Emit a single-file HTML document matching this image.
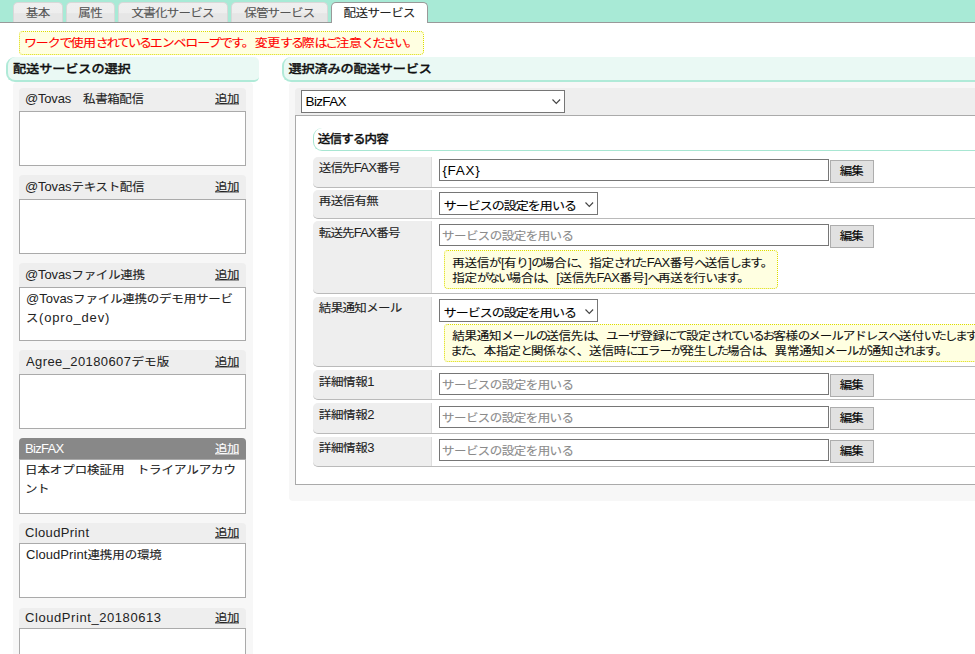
<!DOCTYPE html><html lang="ja"><head><meta charset="utf-8"><title>配送サービス</title><style>

html,body{margin:0;padding:0;}
body{width:975px;height:654px;overflow:hidden;background:#fff;font-family:"Liberation Sans", "Noto Sans CJK JP", sans-serif;font-size:13px;}
.pg{position:relative;width:975px;height:654px;overflow:hidden;background:#fff;}
.a{position:absolute;box-sizing:border-box;}
.t{position:absolute;white-space:nowrap;line-height:20px;height:20px;transform:scaleY(0.9);-webkit-text-stroke:0.12px;transform-origin:0 50%;}
.tab{top:2px;height:20px;border:1px solid #d8d8d8;border-bottom:none;border-radius:5px 5px 0 0;background:linear-gradient(#efefef 0,#eeeeee 52%,#e6e6e6 56%,#e6e6e6 100%);}
.sec{background:#eaf9f4;border-left:2px solid #b0ead8;border-bottom:2px solid #b0ead8;border-radius:9px 5px 5px 9px;}
.ih{background:#eee;border-radius:4px 4px 0 0;}
.ib{background:#fff;border:1px solid #aaa;}
.lab{background:#eee;border-radius:5px 0 0 5px;border-right:1px solid #ddd;border-bottom:1px solid #bababa;}
.rl{height:1px;background:#bababa;}
.inp{background:#fff;border:1px solid #767676;}
.btn{background:#e1e1e1;border:1px solid #adadad;}
.note{background:#ffffe1;border:1px dotted #dcdc00;border-radius:4px;}

</style></head><body><div class="pg">
<nav>
<div class="a" style="left:0;top:0;width:975px;height:22px;background:#a8ead6;"></div>
<div class="a" style="left:0;top:22px;width:975px;height:1px;background:#999;"></div>
<div class="a tab" style="left:13.0px;width:49.5px;"></div>
<span class="t" style="left:25.8px;top:2.9px;font-size:12.5px;font-weight:normal;color:#555;"><span style="letter-spacing:-0.50px;">基本</span></span>
<div class="a tab" style="left:65.5px;width:49.5px;"></div>
<span class="t" style="left:78.2px;top:2.9px;font-size:12.5px;font-weight:normal;color:#555;"><span style="letter-spacing:-0.50px;">属性</span></span>
<div class="a tab" style="left:118.0px;width:109.5px;"></div>
<span class="t" style="left:131.4px;top:2.9px;font-size:12.5px;font-weight:normal;color:#555;"><span style="letter-spacing:-0.75px;">文書化</span><span style="letter-spacing:-0.75px;">サービス</span></span>
<div class="a tab" style="left:230.5px;width:97.0px;"></div>
<span class="t" style="left:244.2px;top:2.9px;font-size:12.5px;font-weight:normal;color:#555;"><span style="letter-spacing:-0.80px;">保管</span><span style="letter-spacing:-0.80px;">サービス</span></span>
<div class="a tab" style="left:330.5px;width:97.0px;background:#fff;height:21px;border-color:#999;"></div>
<span class="t" style="left:343.6px;top:2.9px;font-size:12.5px;font-weight:normal;color:#222;"><span style="letter-spacing:-0.60px;">配送</span><span style="letter-spacing:-0.60px;">サービス</span></span>
</nav>
<section>
<div class="a note" style="left:19px;top:31px;width:405px;height:24px;"></div>
<span class="t" style="left:24.0px;top:33.4px;font-size:13px;font-weight:normal;color:#f00;"><span style="letter-spacing:-1.16px;">ワーク</span><span style="letter-spacing:-2.13px;">で</span><span style="letter-spacing:-0.29px;">使用</span><span style="letter-spacing:-2.13px;">されている</span><span style="letter-spacing:-1.16px;">エンベロープ</span><span style="letter-spacing:-2.13px;">です</span><span style="letter-spacing:-0.18px;">。</span><span style="letter-spacing:-0.29px;">変更</span><span style="letter-spacing:-2.13px;">する</span><span style="letter-spacing:-0.29px;">際</span><span style="letter-spacing:-2.13px;">はご</span><span style="letter-spacing:-0.29px;">注意</span><span style="letter-spacing:-2.13px;">ください</span><span style="letter-spacing:-0.18px;">。</span></span>
</section>
<aside>
<div class="a sec" style="left:6px;top:57px;width:253px;height:24.5px;"></div>
<span class="t" style="left:13.0px;top:58.6px;font-size:13.2px;font-weight:500;color:#111;-webkit-text-stroke:0.35px;"><span style="letter-spacing:-0.12px;">配送</span><span style="letter-spacing:-0.12px;">サービス</span><span style="letter-spacing:-0.12px;">の</span><span style="letter-spacing:-0.12px;">選択</span></span>
<div class="a" style="left:13px;top:82px;width:240px;height:580px;background:#f7f7f7;border-radius:4px;"></div>
<div class="a ih" style="left:19px;top:88.0px;width:227px;height:24.0px;"></div>
<div class="a ib" style="left:19px;top:111.0px;width:227px;height:55.0px;"></div>
<span class="t" style="left:25.0px;top:89.1px;font-size:12.5px;font-weight:normal;color:#222;"><span style="letter-spacing:-0.20px;font-size:13.0px;-webkit-text-stroke:0;display:inline-block;position:relative;top:-0.4px;transform:scaleY(1.09);transform-origin:0 73%;">@Tovas</span><span style="letter-spacing:-0.41px;">　私書箱配信</span></span>
<span class="t" style="left:215.0px;top:89.1px;font-size:12.5px;font-weight:normal;color:#222;text-decoration:underline;"><span style="letter-spacing:-0.50px;">追加</span></span>
<div class="a ih" style="left:19px;top:175.0px;width:227px;height:25.0px;"></div>
<div class="a ib" style="left:19px;top:199.0px;width:227px;height:55.0px;"></div>
<span class="t" style="left:25.0px;top:176.6px;font-size:12.5px;font-weight:normal;color:#222;"><span style="letter-spacing:-0.11px;font-size:13.0px;-webkit-text-stroke:0;display:inline-block;position:relative;top:-0.4px;transform:scaleY(1.09);transform-origin:0 73%;">@Tovas</span><span style="letter-spacing:-0.32px;">テキスト</span><span style="letter-spacing:-0.32px;">配信</span></span>
<span class="t" style="left:215.0px;top:176.6px;font-size:12.5px;font-weight:normal;color:#222;text-decoration:underline;"><span style="letter-spacing:-0.50px;">追加</span></span>
<div class="a ih" style="left:19px;top:263.0px;width:227px;height:25.0px;"></div>
<div class="a ib" style="left:19px;top:287.0px;width:227px;height:54.0px;"></div>
<span class="t" style="left:25.0px;top:264.6px;font-size:12.5px;font-weight:normal;color:#222;"><span style="letter-spacing:-0.11px;font-size:13.0px;-webkit-text-stroke:0;display:inline-block;position:relative;top:-0.4px;transform:scaleY(1.09);transform-origin:0 73%;">@Tovas</span><span style="letter-spacing:-0.32px;">ファイル</span><span style="letter-spacing:-0.32px;">連携</span></span>
<span class="t" style="left:215.0px;top:264.6px;font-size:12.5px;font-weight:normal;color:#222;text-decoration:underline;"><span style="letter-spacing:-0.50px;">追加</span></span>
<span class="t" style="left:26.0px;top:289.1px;font-size:12.5px;font-weight:normal;color:#222;"><span style="letter-spacing:-0.01px;font-size:13.0px;-webkit-text-stroke:0;display:inline-block;position:relative;top:-0.4px;transform:scaleY(1.09);transform-origin:0 73%;">@Tovas</span><span style="letter-spacing:-0.22px;">ファイル</span><span style="letter-spacing:-0.22px;">連携</span><span style="letter-spacing:-0.22px;">の</span><span style="letter-spacing:-0.22px;">デモ</span><span style="letter-spacing:-0.22px;">用</span><span style="letter-spacing:-0.22px;">サービ</span></span>
<span class="t" style="left:26.0px;top:307.7px;font-size:12.5px;font-weight:normal;color:#222;"><span style="letter-spacing:0.60px;">ス</span><span style="letter-spacing:0.81px;font-size:13.0px;-webkit-text-stroke:0;display:inline-block;position:relative;top:-0.4px;transform:scaleY(1.09);transform-origin:0 73%;">(opro_dev)</span></span>
<div class="a ih" style="left:19px;top:350.0px;width:227px;height:25.0px;"></div>
<div class="a ib" style="left:19px;top:374.0px;width:227px;height:55.0px;"></div>
<span class="t" style="left:26.0px;top:351.6px;font-size:12.5px;font-weight:normal;color:#222;"><span style="letter-spacing:0.40px;font-size:13.0px;-webkit-text-stroke:0;display:inline-block;position:relative;top:-0.4px;transform:scaleY(1.09);transform-origin:0 73%;">Agree_20180607</span><span style="letter-spacing:0.19px;">デモ</span><span style="letter-spacing:0.19px;">版</span></span>
<span class="t" style="left:215.0px;top:351.6px;font-size:12.5px;font-weight:normal;color:#222;text-decoration:underline;"><span style="letter-spacing:-0.50px;">追加</span></span>
<div class="a ih" style="left:19px;top:438.0px;width:227px;height:22.0px;background:#888;"></div>
<div class="a ib" style="left:19px;top:459.0px;width:227px;height:55.0px;"></div>
<span class="t" style="left:25.0px;top:438.5px;font-size:12.5px;font-weight:normal;color:#fff;"><span style="letter-spacing:-0.69px;font-size:13.0px;-webkit-text-stroke:0;display:inline-block;position:relative;top:-0.4px;transform:scaleY(1.09);transform-origin:0 73%;">BizFAX</span></span>
<span class="t" style="left:215.0px;top:438.5px;font-size:12.5px;font-weight:normal;color:#fff;text-decoration:underline;"><span style="letter-spacing:-0.50px;">追加</span></span>
<span class="t" style="left:25.0px;top:460.2px;font-size:12.5px;font-weight:normal;color:#222;"><span style="letter-spacing:-0.09px;">日本</span><span style="letter-spacing:-0.09px;">オプロ</span><span style="letter-spacing:-0.09px;">検証用　</span><span style="letter-spacing:-0.09px;">トライアルアカウ</span></span>
<span class="t" style="left:25.0px;top:478.8px;font-size:12.5px;font-weight:normal;color:#222;"><span style="letter-spacing:-0.50px;">ント</span></span>
<div class="a ih" style="left:19px;top:523.0px;width:227px;height:21.0px;"></div>
<div class="a ib" style="left:19px;top:543.0px;width:227px;height:55.0px;"></div>
<span class="t" style="left:25.0px;top:523.0px;font-size:12.5px;font-weight:normal;color:#222;"><span style="letter-spacing:0.37px;font-size:13.0px;-webkit-text-stroke:0;display:inline-block;position:relative;top:-0.4px;transform:scaleY(1.09);transform-origin:0 73%;">CloudPrint</span></span>
<span class="t" style="left:215.0px;top:523.0px;font-size:12.5px;font-weight:normal;color:#222;text-decoration:underline;"><span style="letter-spacing:-0.50px;">追加</span></span>
<span class="t" style="left:26.0px;top:545.1px;font-size:12.5px;font-weight:normal;color:#222;"><span style="letter-spacing:0.08px;font-size:13.0px;-webkit-text-stroke:0;display:inline-block;position:relative;top:-0.4px;transform:scaleY(1.09);transform-origin:0 73%;">CloudPrint</span><span style="letter-spacing:-0.13px;">連携用</span><span style="letter-spacing:-0.13px;">の</span><span style="letter-spacing:-0.13px;">環境</span></span>
<div class="a ih" style="left:19px;top:607.5px;width:227px;height:21.5px;"></div>
<div class="a ib" style="left:19px;top:628.0px;width:227px;height:55.0px;"></div>
<span class="t" style="left:25.0px;top:607.8px;font-size:12.5px;font-weight:normal;color:#222;"><span style="letter-spacing:0.57px;font-size:13.0px;-webkit-text-stroke:0;display:inline-block;position:relative;top:-0.4px;transform:scaleY(1.09);transform-origin:0 73%;">CloudPrint_20180613</span></span>
<span class="t" style="left:215.0px;top:607.8px;font-size:12.5px;font-weight:normal;color:#222;text-decoration:underline;"><span style="letter-spacing:-0.50px;">追加</span></span>
</aside>
<main>
<div class="a sec" style="left:282px;top:57px;width:700px;height:24.5px;"></div>
<span class="t" style="left:288.4px;top:58.6px;font-size:13.2px;font-weight:500;color:#111;-webkit-text-stroke:0.35px;"><span style="letter-spacing:-0.15px;">選択済</span><span style="letter-spacing:-0.15px;">みの</span><span style="letter-spacing:-0.15px;">配送</span><span style="letter-spacing:-0.15px;">サービス</span></span>
<div class="a" style="left:289px;top:82px;width:700px;height:419px;background:#f7f7f7;border-radius:4px;"></div>
<div class="a ih" style="left:295px;top:88px;width:700px;height:28px;"></div>
<div class="a ib" style="left:295px;top:115px;width:700px;height:370px;"></div>
<div class="a inp" style="left:301px;top:90px;width:264px;height:23px;"></div>
<svg class="a" style="left:552.0px;top:99.2px;" width="9" height="6" viewBox="0 0 9 6"><path d="M0.5 0.5 L4.3 4.5 L8.1 0.5" fill="none" stroke="#444" stroke-width="1.1"/></svg>
<div class="a" style="left:313px;top:128px;width:700px;height:23px;border-left:1px solid #a8e6d2;border-bottom:1px solid #a8e6d2;border-radius:9px 0 0 9px;"></div>
<div class="a lab" style="left:313px;top:157.0px;width:119px;height:31.0px;"></div>
<div class="a rl" style="left:431px;top:187.0px;width:700px;"></div>
<div class="a lab" style="left:313px;top:190.0px;width:119px;height:29.0px;"></div>
<div class="a rl" style="left:431px;top:218.0px;width:700px;"></div>
<div class="a lab" style="left:313px;top:221.0px;width:119px;height:73.0px;"></div>
<div class="a rl" style="left:431px;top:293.0px;width:700px;"></div>
<div class="a lab" style="left:313px;top:297.0px;width:119px;height:70.0px;"></div>
<div class="a rl" style="left:431px;top:366.0px;width:700px;"></div>
<div class="a lab" style="left:313px;top:370.0px;width:119px;height:30.0px;"></div>
<div class="a rl" style="left:431px;top:399.0px;width:700px;"></div>
<div class="a lab" style="left:313px;top:403.0px;width:119px;height:31.0px;"></div>
<div class="a rl" style="left:431px;top:433.0px;width:700px;"></div>
<div class="a lab" style="left:313px;top:437.0px;width:119px;height:30.0px;"></div>
<div class="a rl" style="left:431px;top:466.0px;width:700px;"></div>
<div class="a inp" style="left:439px;top:159.0px;width:390px;height:22px;"></div>
<div class="a btn" style="left:830px;top:160.0px;width:44px;height:23px;"></div>
<div class="a inp" style="left:439px;top:224.0px;width:390px;height:22px;"></div>
<div class="a btn" style="left:830px;top:225.0px;width:44px;height:23px;"></div>
<div class="a inp" style="left:439px;top:373.0px;width:390px;height:22px;"></div>
<div class="a btn" style="left:830px;top:374.0px;width:44px;height:23px;"></div>
<div class="a inp" style="left:439px;top:406.0px;width:390px;height:22px;"></div>
<div class="a btn" style="left:830px;top:407.0px;width:44px;height:23px;"></div>
<div class="a inp" style="left:439px;top:439.0px;width:390px;height:22px;"></div>
<div class="a btn" style="left:830px;top:440.0px;width:44px;height:23px;"></div>
<div class="a inp" style="left:439px;top:192.0px;width:159px;height:23px;"></div>
<svg class="a" style="left:584.8px;top:201.5px;" width="9" height="6" viewBox="0 0 9 6"><path d="M0.5 0.5 L4.3 4.5 L8.1 0.5" fill="none" stroke="#444" stroke-width="1.1"/></svg>
<div class="a inp" style="left:439px;top:299.0px;width:159px;height:23px;"></div>
<svg class="a" style="left:584.8px;top:308.5px;" width="9" height="6" viewBox="0 0 9 6"><path d="M0.5 0.5 L4.3 4.5 L8.1 0.5" fill="none" stroke="#444" stroke-width="1.1"/></svg>
<div class="a note" style="left:443.5px;top:250px;width:334px;height:39px;"></div>
<div class="a note" style="left:443.5px;top:324px;width:600px;height:38px;"></div>
<span class="t" style="left:305.6px;top:91.8px;font-size:13px;font-weight:normal;color:#000;"><span style="letter-spacing:-0.68px;font-size:13.5px;-webkit-text-stroke:0;display:inline-block;position:relative;top:-0.4px;transform:scaleY(1.09);transform-origin:0 73%;">BizFAX</span></span>
<span class="t" style="left:317.8px;top:129.3px;font-size:12.5px;font-weight:500;color:#111;-webkit-text-stroke:0.35px;"><span style="letter-spacing:-0.80px;">送信</span><span style="letter-spacing:-0.80px;">する</span><span style="letter-spacing:-0.80px;">内容</span></span>
<span class="t" style="left:318.8px;top:158.1px;font-size:12.5px;font-weight:normal;color:#222;"><span style="letter-spacing:-0.86px;">送信先</span><span style="letter-spacing:-0.65px;font-size:13.0px;-webkit-text-stroke:0;display:inline-block;position:relative;top:-0.4px;transform:scaleY(1.09);transform-origin:0 73%;">FAX</span><span style="letter-spacing:-0.86px;">番号</span></span>
<span class="t" style="left:318.8px;top:190.9px;font-size:12.5px;font-weight:normal;color:#222;"><span style="letter-spacing:-0.62px;">再送信有無</span></span>
<span class="t" style="left:318.8px;top:223.2px;font-size:12.5px;font-weight:normal;color:#222;"><span style="letter-spacing:-0.86px;">転送先</span><span style="letter-spacing:-0.65px;font-size:13.0px;-webkit-text-stroke:0;display:inline-block;position:relative;top:-0.4px;transform:scaleY(1.09);transform-origin:0 73%;">FAX</span><span style="letter-spacing:-0.86px;">番号</span></span>
<span class="t" style="left:318.8px;top:298.1px;font-size:12.5px;font-weight:normal;color:#222;"><span style="letter-spacing:-0.67px;">結果通知</span><span style="letter-spacing:-0.67px;">メール</span></span>
<span class="t" style="left:318.8px;top:372.4px;font-size:12.5px;font-weight:normal;color:#222;"><span style="letter-spacing:-0.37px;">詳細情報</span><span style="letter-spacing:-0.17px;font-size:13.0px;-webkit-text-stroke:0;display:inline-block;position:relative;top:-0.4px;transform:scaleY(1.09);transform-origin:0 73%;">1</span></span>
<span class="t" style="left:318.8px;top:405.2px;font-size:12.5px;font-weight:normal;color:#222;"><span style="letter-spacing:-0.37px;">詳細情報</span><span style="letter-spacing:-0.17px;font-size:13.0px;-webkit-text-stroke:0;display:inline-block;position:relative;top:-0.4px;transform:scaleY(1.09);transform-origin:0 73%;">2</span></span>
<span class="t" style="left:318.8px;top:438.1px;font-size:12.5px;font-weight:normal;color:#222;"><span style="letter-spacing:-0.37px;">詳細情報</span><span style="letter-spacing:-0.17px;font-size:13.0px;-webkit-text-stroke:0;display:inline-block;position:relative;top:-0.4px;transform:scaleY(1.09);transform-origin:0 73%;">3</span></span>
<span class="t" style="left:442.4px;top:161.3px;font-size:13px;font-weight:normal;color:#000;"><span style="letter-spacing:0.72px;font-size:13.5px;-webkit-text-stroke:0;display:inline-block;position:relative;top:-0.4px;transform:scaleY(1.09);transform-origin:0 73%;">{FAX}</span></span>
<span class="t" style="left:442.0px;top:226.1px;font-size:12.5px;font-weight:normal;color:#8a8a8a;"><span style="letter-spacing:-0.55px;">サービス</span><span style="letter-spacing:-0.55px;">の</span><span style="letter-spacing:-0.55px;">設定</span><span style="letter-spacing:-0.55px;">を</span><span style="letter-spacing:-0.55px;">用</span><span style="letter-spacing:-0.55px;">いる</span></span>
<span class="t" style="left:442.0px;top:374.9px;font-size:12.5px;font-weight:normal;color:#8a8a8a;"><span style="letter-spacing:-0.55px;">サービス</span><span style="letter-spacing:-0.55px;">の</span><span style="letter-spacing:-0.55px;">設定</span><span style="letter-spacing:-0.55px;">を</span><span style="letter-spacing:-0.55px;">用</span><span style="letter-spacing:-0.55px;">いる</span></span>
<span class="t" style="left:442.0px;top:407.8px;font-size:12.5px;font-weight:normal;color:#8a8a8a;"><span style="letter-spacing:-0.55px;">サービス</span><span style="letter-spacing:-0.55px;">の</span><span style="letter-spacing:-0.55px;">設定</span><span style="letter-spacing:-0.55px;">を</span><span style="letter-spacing:-0.55px;">用</span><span style="letter-spacing:-0.55px;">いる</span></span>
<span class="t" style="left:442.0px;top:441.0px;font-size:12.5px;font-weight:normal;color:#8a8a8a;"><span style="letter-spacing:-0.55px;">サービス</span><span style="letter-spacing:-0.55px;">の</span><span style="letter-spacing:-0.55px;">設定</span><span style="letter-spacing:-0.55px;">を</span><span style="letter-spacing:-0.55px;">用</span><span style="letter-spacing:-0.55px;">いる</span></span>
<span class="t" style="left:443.8px;top:196.2px;font-size:13px;font-weight:normal;color:#000;"><span style="letter-spacing:-1.00px;">サービス</span><span style="letter-spacing:-1.00px;">の</span><span style="letter-spacing:-1.00px;">設定</span><span style="letter-spacing:-1.00px;">を</span><span style="letter-spacing:-1.00px;">用</span><span style="letter-spacing:-1.00px;">いる</span></span>
<span class="t" style="left:443.8px;top:303.0px;font-size:13px;font-weight:normal;color:#000;"><span style="letter-spacing:-1.00px;">サービス</span><span style="letter-spacing:-1.00px;">の</span><span style="letter-spacing:-1.00px;">設定</span><span style="letter-spacing:-1.00px;">を</span><span style="letter-spacing:-1.00px;">用</span><span style="letter-spacing:-1.00px;">いる</span></span>
<span class="t" style="left:839.8px;top:161.1px;font-size:12.5px;font-weight:normal;color:#000;"><span style="letter-spacing:-1.00px;">編集</span></span>
<span class="t" style="left:839.8px;top:225.7px;font-size:12.5px;font-weight:normal;color:#000;"><span style="letter-spacing:-1.00px;">編集</span></span>
<span class="t" style="left:839.8px;top:374.5px;font-size:12.5px;font-weight:normal;color:#000;"><span style="letter-spacing:-1.00px;">編集</span></span>
<span class="t" style="left:839.8px;top:407.5px;font-size:12.5px;font-weight:normal;color:#000;"><span style="letter-spacing:-1.00px;">編集</span></span>
<span class="t" style="left:839.8px;top:440.7px;font-size:12.5px;font-weight:normal;color:#000;"><span style="letter-spacing:-1.00px;">編集</span></span>
<span class="t" style="left:452.2px;top:253.1px;font-size:12.5px;font-weight:normal;color:#111;"><span style="letter-spacing:-0.24px;">再送信</span><span style="letter-spacing:-2.01px;">が</span><span style="letter-spacing:-0.55px;margin-left:1.5px;font-size:13.0px;-webkit-text-stroke:0;display:inline-block;position:relative;top:-0.4px;transform:scaleY(1.09);transform-origin:0 73%;">[</span><span style="letter-spacing:-0.24px;">有</span><span style="letter-spacing:-2.01px;">り</span><span style="letter-spacing:-0.55px;margin-left:1.5px;font-size:13.0px;-webkit-text-stroke:0;display:inline-block;position:relative;top:-0.4px;transform:scaleY(1.09);transform-origin:0 73%;">]</span><span style="letter-spacing:-2.01px;">の</span><span style="letter-spacing:-0.24px;">場合</span><span style="letter-spacing:-2.01px;">に</span><span style="letter-spacing:-0.13px;">、</span><span style="letter-spacing:-0.24px;">指定</span><span style="letter-spacing:-2.01px;">された</span><span style="letter-spacing:-0.55px;margin-left:1.5px;font-size:13.0px;-webkit-text-stroke:0;display:inline-block;position:relative;top:-0.4px;transform:scaleY(1.09);transform-origin:0 73%;">FAX</span><span style="letter-spacing:-0.24px;">番号</span><span style="letter-spacing:-2.01px;">へ</span><span style="letter-spacing:-0.24px;">送信</span><span style="letter-spacing:-2.01px;">します</span><span style="letter-spacing:-0.13px;">。</span></span>
<span class="t" style="left:452.2px;top:267.6px;font-size:12.5px;font-weight:normal;color:#111;"><span style="letter-spacing:-0.16px;">指定</span><span style="letter-spacing:-1.94px;">がない</span><span style="letter-spacing:-0.16px;">場合</span><span style="letter-spacing:-1.94px;">は</span><span style="letter-spacing:-0.06px;">、</span><span style="letter-spacing:-0.48px;font-size:13.0px;-webkit-text-stroke:0;display:inline-block;position:relative;top:-0.4px;transform:scaleY(1.09);transform-origin:0 73%;">[</span><span style="letter-spacing:-0.16px;">送信先</span><span style="letter-spacing:-0.48px;font-size:13.0px;-webkit-text-stroke:0;display:inline-block;position:relative;top:-0.4px;transform:scaleY(1.09);transform-origin:0 73%;">FAX</span><span style="letter-spacing:-0.16px;">番号</span><span style="letter-spacing:-0.48px;font-size:13.0px;-webkit-text-stroke:0;display:inline-block;position:relative;top:-0.4px;transform:scaleY(1.09);transform-origin:0 73%;">]</span><span style="letter-spacing:-1.94px;">へ</span><span style="letter-spacing:-0.16px;">再送</span><span style="letter-spacing:-1.94px;">を</span><span style="letter-spacing:-0.16px;">行</span><span style="letter-spacing:-1.94px;">います</span><span style="letter-spacing:-0.06px;">。</span></span>
<span class="t" style="left:452.2px;top:326.2px;font-size:12.5px;font-weight:normal;color:#111;"><span style="letter-spacing:-0.21px;">結果通知</span><span style="letter-spacing:-1.04px;">メール</span><span style="letter-spacing:-1.98px;">の</span><span style="letter-spacing:-0.21px;">送信先</span><span style="letter-spacing:-1.98px;">は</span><span style="letter-spacing:-0.10px;">、</span><span style="letter-spacing:-1.04px;">ユーザ</span><span style="letter-spacing:-0.21px;">登録</span><span style="letter-spacing:-1.98px;">にて</span><span style="letter-spacing:-0.21px;">設定</span><span style="letter-spacing:-1.98px;">されているお</span><span style="letter-spacing:-0.21px;">客様</span><span style="letter-spacing:-1.98px;">の</span><span style="letter-spacing:-1.04px;">メールアドレス</span><span style="letter-spacing:-1.98px;">へ</span><span style="letter-spacing:-0.21px;">送付</span><span style="letter-spacing:-1.98px;">いたします</span><span style="letter-spacing:-0.10px;">。</span></span>
<span class="t" style="left:450.2px;top:340.6px;font-size:12.5px;font-weight:normal;color:#111;"><span style="letter-spacing:-1.98px;">また</span><span style="letter-spacing:-0.10px;">、</span><span style="letter-spacing:-0.21px;">本指定</span><span style="letter-spacing:-1.98px;">と</span><span style="letter-spacing:-0.21px;">関係</span><span style="letter-spacing:-1.98px;">なく</span><span style="letter-spacing:-0.10px;">、</span><span style="letter-spacing:-0.21px;">送信時</span><span style="letter-spacing:-1.98px;">に</span><span style="letter-spacing:-1.04px;">エラー</span><span style="letter-spacing:-1.98px;">が</span><span style="letter-spacing:-0.21px;">発生</span><span style="letter-spacing:-1.98px;">した</span><span style="letter-spacing:-0.21px;">場合</span><span style="letter-spacing:-1.98px;">は</span><span style="letter-spacing:-0.10px;">、</span><span style="letter-spacing:-0.21px;">異常通知</span><span style="letter-spacing:-1.04px;">メール</span><span style="letter-spacing:-1.98px;">が</span><span style="letter-spacing:-0.21px;">通知</span><span style="letter-spacing:-1.98px;">されます</span><span style="letter-spacing:-0.10px;">。</span></span>
</main>
</div></body></html>
